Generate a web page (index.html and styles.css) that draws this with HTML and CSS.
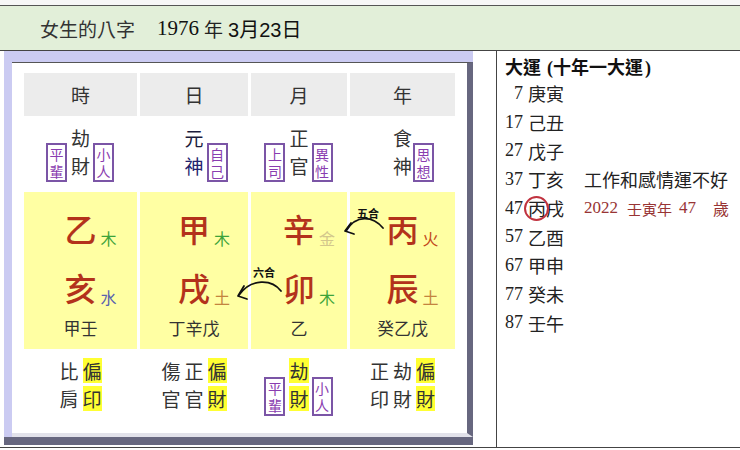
FILE: index.html
```html
<!DOCTYPE html>
<html lang="zh-Hant">
<head>
<meta charset="utf-8">
<title>女生的八字</title>
<link rel="stylesheet" href="styles.css">
</head>
<body>
<div class="top"></div>
<div class="page">
  <div class="title">
    <span class="t1">女生的八字</span><span class="t2">1976</span><span class="t3">年</span><span class="t4">3月23日</span>
  </div>
  <div class="left">
    <div class="frame">
      <div class="inner">
        <div class="chart">
          <div class="hd">時</div>
          <div class="hd">日</div>
          <div class="hd">月</div>
          <div class="hd">年</div>

          <div class="god">
            <span class="tag tl">平輩</span>
            <span class="stack"><span>劫</span><span>財</span></span>
            <span class="tag tr">小人</span>
          </div>
          <div class="god">
            <span></span>
            <span class="stack"><span class="yuan">元</span><span class="shen">神</span></span>
            <span class="tag tr">自己</span>
          </div>
          <div class="god">
            <span class="tag tl">上司</span>
            <span class="stack"><span>正</span><span>官</span></span>
            <span class="tag tr">異性</span>
          </div>
          <div class="god">
            <span></span>
            <span class="stack"><span>食</span><span>神</span></span>
            <span class="tag tr tight">思想</span>
          </div>

          <div class="gz">
            <div class="pair"><span></span><span class="big">乙</span><span class="el wood">木</span></div>
            <div class="pair"><span></span><span class="big">亥</span><span class="el water">水</span></div>
            <div class="hid">甲壬</div>
          </div>
          <div class="gz">
            <div class="pair"><span></span><span class="big">甲</span><span class="el wood">木</span></div>
            <div class="pair"><span></span><span class="big">戌</span><span class="el earth">土</span></div>
            <div class="hid">丁辛戊</div>
          </div>
          <div class="gz">
            <div class="pair"><span></span><span class="big">辛</span><span class="el metal">金</span></div>
            <div class="pair"><span></span><span class="big">卯</span><span class="el wood">木</span></div>
            <div class="hid">乙</div>
          </div>
          <div class="gz">
            <div class="pair"><span></span><span class="big">丙</span><span class="el fire">火</span></div>
            <div class="pair"><span></span><span class="big">辰</span><span class="el earth">土</span></div>
            <div class="hid">癸乙戊</div>
          </div>

          <div class="sub">
            <div class="lines">
              <div class="ln"><span>比</span><span class="hl">偏</span></div>
              <div class="ln"><span>肩</span><span class="hl">印</span></div>
            </div>
          </div>
          <div class="sub">
            <div class="lines">
              <div class="ln"><span>傷</span><span>正</span><span class="hl">偏</span></div>
              <div class="ln"><span>官</span><span>官</span><span class="hl">財</span></div>
            </div>
          </div>
          <div class="sub god2">
            <span class="tag tl">平輩</span>
            <span class="lines">
              <span class="ln"><span class="hl">劫</span></span>
              <span class="ln"><span class="hl">財</span></span>
            </span>
            <span class="tag tr">小人</span>
          </div>
          <div class="sub">
            <div class="lines">
              <div class="ln"><span>正</span><span>劫</span><span class="hl">偏</span></div>
              <div class="ln"><span>印</span><span>財</span><span class="hl">財</span></div>
            </div>
          </div>

          <svg class="arrows" width="431" height="354" viewBox="0 0 431 354">
            <path d="M359,155 C349,143 332,141 322,158" />
            <path d="M327,150 L321,158 L330,161" />
            <text x="344" y="145">五合</text>
            <path d="M257,218 C248,206 227,205 215,222" />
            <path d="M220,213 L214,223 L223,226" />
            <text x="240" y="204">六合</text>
          </svg>
        </div>
      </div>
    </div>
  </div>
  <div class="right">
    <div class="dyh">大運 <span class="paren">(</span>十年一大運<span class="paren">)</span></div>
    <div class="dy"><span class="n">7</span><span class="g">庚寅</span></div>
    <div class="dy"><span class="n">17</span><span class="g">己丑</span></div>
    <div class="dy"><span class="n">27</span><span class="g">戊子</span></div>
    <div class="dy"><span class="n">37</span><span class="g">丁亥</span><span class="note">工作和感情運不好</span></div>
    <div class="dy"><span class="n">47</span><span class="g"><span class="circ">丙</span>戌</span><span class="red"><span class="rn">2022</span><span class="rc">壬寅年</span><span class="rn r47">47</span><span class="rc rs">歲</span></span></div>
    <div class="dy"><span class="n">57</span><span class="g">乙酉</span></div>
    <div class="dy"><span class="n">67</span><span class="g">甲申</span></div>
    <div class="dy"><span class="n">77</span><span class="g">癸未</span></div>
    <div class="dy"><span class="n">87</span><span class="g">壬午</span></div>
  </div>
</div>
</body>
</html>
```
FILE: styles.css
```css
html, body {
  margin: 0;
  padding: 0;
}
body {
  width: 740px;
  height: 450px;
  overflow: hidden;
  background: #ffffff;
  font-family: "Noto Sans CJK TC", "Noto Sans CJK SC", sans-serif;
  color: #222;
}
.top {
  height: 5px;
  background: #f7f7f7;
  border-bottom: 1px solid #555;
}
.page {
  display: grid;
  grid-template-columns: 496px 244px;
}
.title {
  grid-column: 1 / -1;
  height: 44px;
  background: #e2efd9;
  border-bottom: 1px solid #444;
  display: flex;
  align-items: center;
  padding-left: 40px;
  font-size: 19px;
  color: #333;
}
.t2 {
  margin-left: 22px;
  font-family: "Liberation Serif", serif;
  font-size: 21px;
  color: #111;
}
.t3 {
  margin-left: 5px;
  color: #222;
}
.t4 {
  margin-left: 5px;
  font-family: "Liberation Sans", "Noto Sans CJK TC", sans-serif;
  font-size: 20px;
  color: #111;
}
.left {
  padding: 0 0 2px 4px;
  border-bottom: 1px solid #444;
}
.frame {
  width: 469px;
  box-sizing: border-box;
  background: #cbcbf2;
  padding: 11px 0 0 8px;
  border-bottom: 8px solid #67677f;
}
.inner {
  background: #fff;
  border-top: 1px solid #555;
  border-right: 6px solid #67677f;
  border-bottom: 4px solid #e2e2ea;
}
.chart {
  position: relative;
  display: grid;
  grid-template-columns: 113px 108px 96px 105px;
  grid-template-rows: 43px 70px 157px 75px;
  gap: 3px;
  margin: 10px 12px 6px;
}
.hd {
  background: #ececec;
  display: flex;
  align-items: center;
  justify-content: center;
  font-size: 19px;
  color: #333;
}
.god {
  display: grid;
  grid-template-columns: 1fr auto 1fr;
  align-items: end;
  align-content: start;
  padding-top: 5px;
}
.stack {
  display: flex;
  flex-direction: column;
  font-size: 19px;
  line-height: 27.5px;
  color: #333;
}
.yuan { color: #1c1c3c; }
.shen { color: #22226e; }
.tag {
  box-sizing: border-box;
  width: 21px;
  border: 2px solid #7b55a6;
  padding: 1px 1px;
  font-size: 14px;
  line-height: 16.5px;
  color: #8a3db0;
  background: #fff;
  text-align: center;
  margin-bottom: -3px;
}
.tl {
  justify-self: end;
  margin-right: 4px;
}
.tr {
  justify-self: start;
  margin-left: 3px;
}
.tight {
  margin-left: 1px;
}
.gz {
  background: #ffffa3;
  display: flex;
  flex-direction: column;
  padding-top: 16px;
}
.pair {
  display: grid;
  grid-template-columns: 1fr auto 1fr;
  align-items: end;
  height: 40px;
}
.pair + .pair {
  margin-top: 19px;
}
.big {
  font-size: 32px;
  line-height: 40px;
  font-weight: 500;
  color: #b3321b;
}
.el {
  font-size: 16px;
  line-height: 20px;
  margin-left: 4px;
}
.wood { color: #3da33a; }
.water { color: #5a62ae; }
.earth { color: #c3843f; }
.metal { color: #d3c78c; }
.fire { color: #c24a1c; }
.hid {
  margin-top: 10px;
  font-size: 17px;
  line-height: 22px;
  text-align: center;
  color: #333;
}
.sub {
  display: flex;
  justify-content: center;
  align-items: flex-start;
  padding-top: 5px;
}
.lines {
  display: flex;
  flex-direction: column;
}
.ln {
  display: flex;
  gap: 4px;
  align-items: center;
  height: 27.5px;
  font-size: 19px;
  line-height: 27.5px;
  color: #333;
}
.hl {
  background: #ffff33;
  line-height: 25px;
}
.god2 {
  display: grid;
  grid-template-columns: 1fr auto 1fr;
  align-items: end;
  align-content: start;
}
.god2 .tag {
  margin-bottom: -4px;
}
.arrows {
  position: absolute;
  left: 0;
  top: 0;
  overflow: visible;
  pointer-events: none;
}
.arrows path {
  fill: none;
  stroke: #111;
  stroke-width: 1.8;
  stroke-linecap: round;
  stroke-linejoin: round;
}
.arrows text {
  font-family: "Noto Sans CJK TC", sans-serif;
  font-size: 11px;
  font-weight: 700;
  text-anchor: middle;
  fill: #111;
}
.right {
  border-left: 1px solid #444;
  border-bottom: 1px solid #444;
  padding: 3px 0 0 8px;
}
.dyh {
  height: 25px;
  line-height: 25px;
  font-size: 18px;
  font-weight: 700;
  color: #111;
}
.paren {
  font-family: "Liberation Serif", serif;
  font-weight: 700;
  margin-left: 2px;
}
.dy {
  display: flex;
  align-items: center;
  height: 28.7px;
  font-size: 18px;
  color: #222;
}
.n {
  width: 18px;
  text-align: right;
  font-family: "Liberation Serif", serif;
  font-size: 18px;
}
.g {
  margin-left: 5px;
}
.circ {
  position: relative;
}
.circ::after {
  content: "";
  position: absolute;
  left: -4px;
  top: 50%;
  width: 21px;
  height: 21px;
  margin-top: -12px;
  border: 2px solid #c0323f;
  border-radius: 50%;
}
.note {
  margin-left: 20px;
}
.red {
  margin-left: 20px;
  display: flex;
  align-items: center;
  color: #983434;
}
.rn {
  font-family: "Liberation Serif", serif;
  font-size: 17px;
}
.rc {
  font-size: 15px;
  margin-left: 9px;
}
.r47 {
  margin-left: 7px;
}
.rs {
  margin-left: 17px;
  font-size: 16px;
}
```
